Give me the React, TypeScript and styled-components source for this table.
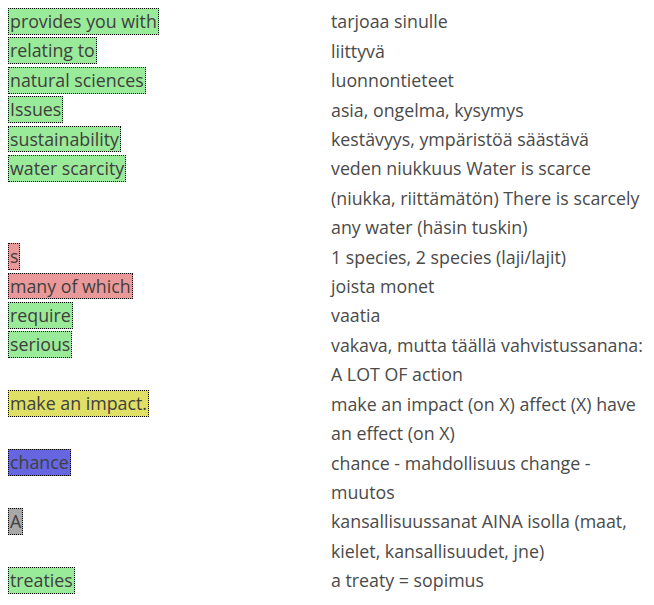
import React from "react";
import styled, { createGlobalStyle } from "styled-components";

const GlobalStyle = createGlobalStyle`
  html, body { margin: 0; padding: 0; background: #ffffff; }
  body { font-family: "Open Sans", "Noto Sans", sans-serif; }
`;

type Tone = "green" | "red" | "yellow" | "blue" | "gray";

const toneColors: Record<Tone, string> = {
  green: "#99ea99",
  red: "#e99999",
  yellow: "#e0e066",
  blue: "#6666e0",
  gray: "#a8a8a8",
};

const Page = styled.div`
  padding: 0 0 0 8px;
  margin-top: -22px;
  font-size: 17.8px;
  line-height: 29.4px;
  color: #444444;
`;

const Heading = styled.div`
  font-weight: 700;
  color: #333333;
`;

const Table = styled.div`
  display: grid;
  grid-template-columns: 323px 1fr;
`;

const Term = styled.div`
  min-width: 0;
`;

const Mark = styled.span<{ $tone: Tone }>`
  background: ${(p) => toneColors[p.$tone]};
  border: 1px dotted #000000;
  padding: 0.4px 1px;
  color: #3f3f3f;
`;

const Meaning = styled.div`
  color: #4a4a4a;
  padding-right: 2px;
`;

const rows: { term: string; tone: Tone; meaning: string }[] = [
  { term: "provides you with", tone: "green", meaning: "tarjoaa sinulle" },
  { term: "relating to", tone: "green", meaning: "liittyvä" },
  { term: "natural sciences", tone: "green", meaning: "luonnontieteet" },
  { term: "Issues", tone: "green", meaning: "asia, ongelma, kysymys" },
  { term: "sustainability", tone: "green", meaning: "kestävyys, ympäristöä säästävä" },
  {
    term: "water scarcity",
    tone: "green",
    meaning:
      "veden niukkuus Water is scarce (niukka, riittämätön) There is scarcely any water (häsin tuskin)",
  },
  { term: "s", tone: "red", meaning: "1 species, 2 species (laji/lajit)" },
  { term: "many of which", tone: "red", meaning: "joista monet" },
  { term: "require", tone: "green", meaning: "vaatia" },
  {
    term: "serious",
    tone: "green",
    meaning: "vakava, mutta täällä vahvistussanana: A LOT OF action",
  },
  {
    term: "make an impact.",
    tone: "yellow",
    meaning: "make an impact (on X) affect (X) have an effect (on X)",
  },
  { term: "chance", tone: "blue", meaning: "chance - mahdollisuus change - muutos" },
  {
    term: "A",
    tone: "gray",
    meaning: "kansallisuussanat AINA isolla (maat, kielet, kansallisuudet, jne)",
  },
  { term: "treaties", tone: "green", meaning: "a treaty = sopimus" },
];

export default function App() {
  return (
    <>
      <GlobalStyle />
      <Page>
        <Heading>Avainsanat</Heading>
        <Table>
          {rows.map((r, i) => (
            <React.Fragment key={i}>
              <Term>
                <Mark $tone={r.tone}>{r.term}</Mark>
              </Term>
              <Meaning>{r.meaning}</Meaning>
            </React.Fragment>
          ))}
        </Table>
      </Page>
    </>
  );
}
